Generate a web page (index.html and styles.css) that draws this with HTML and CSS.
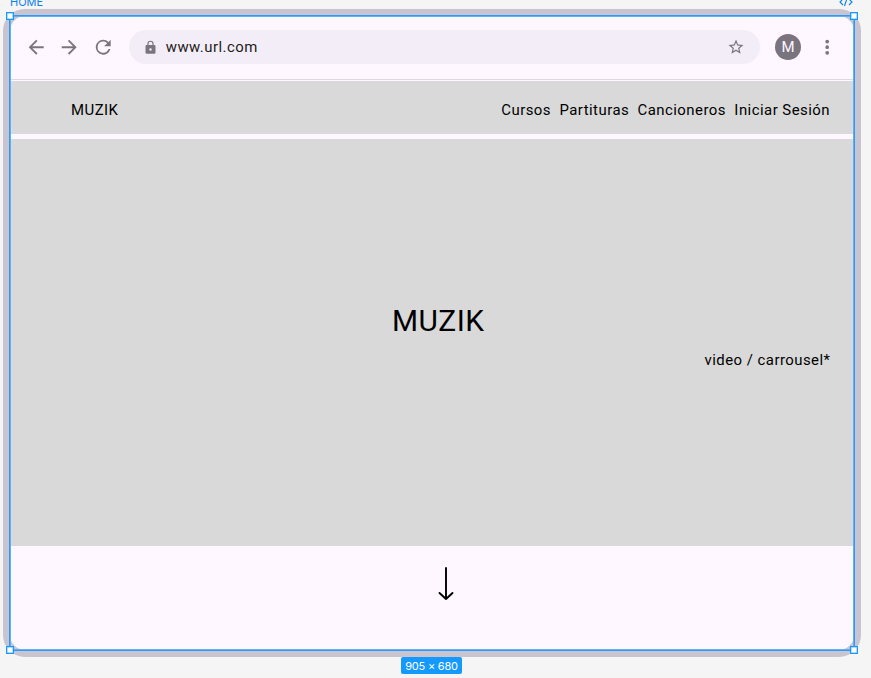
FILE: index.html
```html
<!DOCTYPE html>
<html lang="es">
<head>
<meta charset="utf-8">
<title>HOME</title>
<link rel="stylesheet" href="styles.css">
</head>
<body>
<div class="canvas">
  <span class="frame-label">HOME</span>
  <svg class="code-icon" viewBox="0 0 14 10"><path d="M4 2 1 5l3 3M10 2l3 3-3 3M8.500 0l-3 9"/></svg>
  <main class="window">
    <header class="browser-bar">
      <svg class="nav-icon" viewBox="0 0 24 24"><path d="M20 11H7.830l5.590-5.590L12 4l-8 8 8 8 1.410-1.410L7.830 13H20z"/></svg>
      <svg class="nav-icon" viewBox="0 0 24 24"><path d="m12 4-1.410 1.410L16.170 11H4v2h12.170l-5.580 5.590L12 20l8-8z"/></svg>
      <svg class="nav-icon" viewBox="0 0 24 24"><path d="M17.650 6.350A7.960 7.960 0 0 0 12 4a8 8 0 1 0 7.730 10h-2.080A6 6 0 1 1 12 6c1.660 0 3.140.69 4.220 1.780L13 11h7V4z"/></svg>
      <div class="address">
        <svg class="lock" viewBox="0 0 24 24"><path d="M18 8h-1V6A5 5 0 0 0 7 6v2H6a2 2 0 0 0-2 2v10a2 2 0 0 0 2 2h12a2 2 0 0 0 2-2V10a2 2 0 0 0-2-2m-6 9a2 2 0 1 1 0-4 2 2 0 0 1 0 4m3.100-9H8.900V6a3.100 3.100 0 0 1 6.200 0z"/></svg>
        <span class="url">www.url.com</span>
        <svg class="star" viewBox="0 0 24 24"><path d="m22 9.240-7.190-.62L12 2 9.190 8.630 2 9.240l5.460 4.730L5.820 21 12 17.270 18.180 21l-1.630-7.030zM12 15.400l-3.760 2.270 1-4.280-3.320-2.880 4.380-.38L12 6.100l1.710 4.040 4.380.38-3.320 2.880 1 4.280z"/></svg>
      </div>
      <span class="avatar">M</span>
      <svg class="more" viewBox="0 0 24 24"><path d="M12 8a2 2 0 1 0 0-4 2 2 0 0 0 0 4m0 2a2 2 0 1 0 0 4 2 2 0 0 0 0-4m0 6a2 2 0 1 0 0 4 2 2 0 0 0 0-4"/></svg>
    </header>
    <nav class="site-nav">
      <span class="brand">MUZIK</span>
      <div class="links"><span>Cursos</span><span>Partituras</span><span>Cancioneros</span><span>Iniciar Sesión</span></div>
    </nav>
    <section class="hero">
      <h1>MUZIK</h1>
      <p>video / carrousel*</p>
    </section>
    <svg class="down" viewBox="0 0 16 34"><path d="M8 1v31M1.500 26 8 32l6.500-6"/></svg>
  </main>
  <div class="selection"><i class="handle tl"></i><i class="handle tr"></i><i class="handle bl"></i><i class="handle br"></i></div>
  <span class="size">905 × 680</span>
</div>
</body>
</html>
```
FILE: styles.css
```css
* { box-sizing: border-box; }
body { margin: 0; background: #f5f5f5; font-family: Roboto, sans-serif; }
.canvas { position: relative; height: 678px; overflow: hidden; padding: 9px 0 0 3px; }
.frame-label { position: absolute; left: 10px; top: -5px; font: 11px/14px Inter, sans-serif; color: #0d80e8; }
.code-icon { position: absolute; left: 839px; top: -3px; width: 14px; height: 10px; fill: none; stroke: #0d80e8; stroke-width: 1.1; }
.window { width: 858px; height: 648px; border: 7px solid #cac4d0; border-radius: 22px; background: #fef7ff; display: flex; flex-direction: column; }
.browser-bar { height: 64px; flex: none; border-bottom: 1px solid #dfd8e3; display: flex; align-items: center; padding: 0 0 1px 14.500px; }
.browser-bar svg { fill: #79747e; flex: none; }
.nav-icon { width: 22.400px; height: 22.400px; margin-right: 11.200px; }
.address { width: 631px; height: 33.600px; margin-left: 3.500px; padding: 0 15px 0 14px; border-radius: 17px; background: #f3edf7; display: flex; align-items: center; }
.lock { width: 15px; height: 15px; margin-left: .5px; }
.url { margin-left: 7.500px; flex: 1; font-size: 14.930px; letter-spacing: .467px; color: #1d1b20; }
.star { width: 18px; height: 18px; }
.avatar { width: 26px; height: 26px; margin-left: 15.300px; border-radius: 50%; background: #79747e; color: #fef7ff; font-size: 15px; line-height: 26px; text-align: center; }
.more { width: 22.400px; height: 22.400px; margin-left: 15px; }
.site-nav { height: 53px; flex: none; margin-top: 1px; padding: 5px 24px 0 61px; background: #d9d9d9; display: flex; align-items: center; justify-content: space-between; font-size: 14.930px; }
.brand { letter-spacing: .467px; }
.links { display: flex; gap: 8.400px; letter-spacing: .467px; }
.hero { height: 407px; flex: none; margin-top: 5px; padding: 163px 23.500px 0 11px; background: #d9d9d9; }
.hero h1 { margin: 0; padding-left: 25px; font-size: 29.860px; line-height: 37px; font-weight: 400; letter-spacing: .467px; text-align: center; }
.hero p { margin: 10px 0 0; font-size: 14.930px; line-height: 22px; letter-spacing: .467px; text-align: right; }
.down { width: 16px; height: 34px; margin: 21px 0 0 428px; fill: none; stroke: #000; stroke-width: 1.900; stroke-linecap: round; stroke-linejoin: round; }
.selection { position: absolute; left: 9px; top: 15px; width: 846px; height: 636px; border: 1px solid #2b9cf5; box-shadow: inset 0 0 0 .5px #2b9cf5, inset 0 0 0 1px #8cc9fa; }
.handle { position: absolute; width: 8px; height: 8px; background: #fff; border: 1px solid #1899fb; box-shadow: inset 0 0 0 .5px #65b9fb; }
.tl { left: -4px; top: -4px; } .tr { right: -4px; top: -4px; }
.bl { left: -4px; bottom: -4px; } .br { right: -4px; bottom: -4px; }
.size { position: absolute; left: 401px; top: 657px; width: 61px; height: 17px; border-radius: 2px; background: #1499ff; color: #fff; font: 11px/18px Inter, sans-serif; letter-spacing: -.2px; text-align: center; white-space: nowrap; }
```
